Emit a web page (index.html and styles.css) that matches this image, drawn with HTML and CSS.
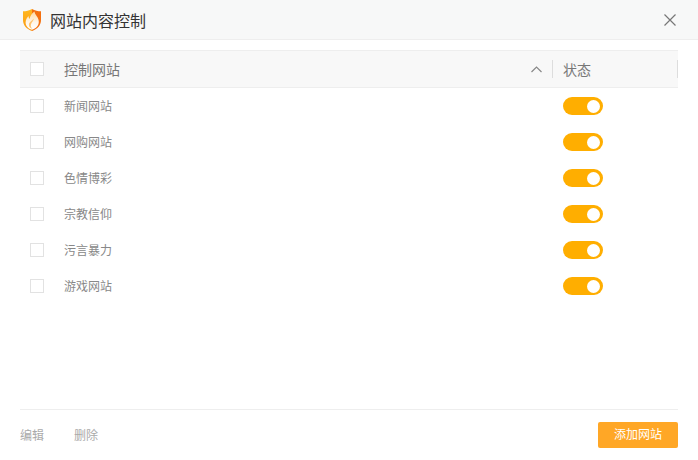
FILE: index.html
```html
<!DOCTYPE html>
<html lang="zh">
<head>
<meta charset="utf-8">
<title>网站内容控制</title>
<link rel="stylesheet" href="styles.css">
</head>
<body>
<div class="dialog">
  <header class="titlebar">
    <svg class="logo" viewBox="0 0 20 24" width="20" height="24">
      <defs>
        <linearGradient id="shieldLeft" x1="0" y1="0" x2="0" y2="1">
          <stop offset="0" stop-color="#ffb81f"/>
          <stop offset="1" stop-color="#fb9a12"/>
        </linearGradient>
        <linearGradient id="flame" x1="0" y1="0" x2="0" y2="1">
          <stop offset="0" stop-color="#ffd9a0"/>
          <stop offset="0.6" stop-color="#fff6e8"/>
          <stop offset="1" stop-color="#ffffff"/>
        </linearGradient>
      </defs>
      <path d="M10 1C7.200 2.600 4 3.300 1 3.300V12c0 5.700 4 9 9 11z" fill="url(#shieldLeft)"/>
      <path d="M10 1c2.800 1.600 6 2.300 9 2.300V12c0 5.700-4 9-9 11z" fill="#f4700f"/>
      <path d="M12.500 3.500c.3 3.400 4.300 5.600 4.300 10.200 0 3.800-2.800 7-6.800 8-3.800-1-6.400-3.800-6.400-7.200 0-2.800 1.500-4.700 2.900-6.400.1 1.300.5 2.300 1.200 3C7.800 8.300 9.800 5.400 12.500 3.500z" fill="url(#flame)"/>
      <path d="M11.600 10.500c.5 2.200-2.800 4-2.800 7 0 1.300.5 2.400 1.500 3.200-2-.5-3.400-2-3.400-4 0-2.800 3.300-3.700 4.700-6.200z" fill="#ffc46e"/>
    </svg>
    <h1 class="title">网站内容控制</h1>
    <svg class="close" viewBox="0 0 12 12" width="12" height="12">
      <path d="M.5.500l11 11M11.500.500l-11 11" stroke="#777" stroke-width="1.200" fill="none"/>
    </svg>
  </header>
  <main class="content">
    <div class="table-head">
      <span class="check"></span>
      <span class="col-name">控制网站</span>
      <svg class="chevron" viewBox="0 0 11 7" width="11" height="7">
        <path d="M.5 6l5-5 5 5" stroke="#888" stroke-width="1.200" fill="none"/>
      </svg>
      <span class="col-state">状态</span>
    </div>
    <ul class="rows">
      <li class="row"><span class="check"></span><span class="col-name">新闻网站</span><span class="switch"><span class="knob"></span></span></li>
      <li class="row"><span class="check"></span><span class="col-name">网购网站</span><span class="switch"><span class="knob"></span></span></li>
      <li class="row"><span class="check"></span><span class="col-name">色情博彩</span><span class="switch"><span class="knob"></span></span></li>
      <li class="row"><span class="check"></span><span class="col-name">宗教信仰</span><span class="switch"><span class="knob"></span></span></li>
      <li class="row"><span class="check"></span><span class="col-name">污言暴力</span><span class="switch"><span class="knob"></span></span></li>
      <li class="row"><span class="check"></span><span class="col-name">游戏网站</span><span class="switch"><span class="knob"></span></span></li>
    </ul>
  </main>
  <footer class="footer">
    <span class="link link-edit">编辑</span>
    <span class="link">删除</span>
    <span class="add">添加网站</span>
  </footer>
</div>
</body>
</html>
```
FILE: styles.css
```css
* { box-sizing: border-box; }
html, body { margin: 0; padding: 0; }
body {
  width: 698px;
  height: 460px;
  background: #fff;
  font-family: "Liberation Sans", "Noto Sans CJK SC", sans-serif;
  overflow: hidden;
}
.dialog { display: flex; flex-direction: column; height: 460px; }
.titlebar {
  height: 40px;
  background: #f7f8f8;
  border-bottom: 1px solid #eeeeee;
  display: flex;
  align-items: center;
  padding: 0 22px;
  flex: none;
}
.logo { flex: none; margin-right: 8px; }
.title { margin: 0; font-size: 16px; font-weight: 400; color: #333; flex: 1; }
.close { flex: none; }
.content { flex: 1; padding: 10px 20px 0; }
.table-head {
  height: 38px;
  background: #f8f8f8;
  border-top: 1px solid #eee;
  border-bottom: 1px solid #eee;
  display: flex;
  align-items: center;
  padding-left: 10px;
  font-size: 14px;
  color: #777;
}
.check {
  width: 14px;
  height: 14px;
  border: 1px solid #e2e2e2;
  background: #fff;
  flex: none;
  margin-right: 20px;
}
.table-head .col-name { flex: 1; }
.chevron { flex: none; margin-right: 10px; }
.col-state {
  flex: none;
  width: 126px;
  height: 18px;
  line-height: 20px;
  padding-left: 10px;
  border-left: 1px solid #ddd;
  border-right: 1px solid #ddd;
}
.rows { list-style: none; margin: 0; padding: 0; }
.row {
  height: 36px;
  display: flex;
  align-items: center;
  padding-left: 10px;
  font-size: 12px;
  color: #888;
}
.row .col-name { width: 499px; flex: none; padding-bottom: 2px; }
.switch {
  width: 40px;
  height: 18px;
  border-radius: 9px;
  background: #ffae00;
  flex: none;
  display: flex;
  align-items: center;
  justify-content: flex-end;
  padding-right: 3px;
}
.knob { width: 13px; height: 13px; border-radius: 50%; background: #fff; }
.footer {
  flex: none;
  height: 51px;
  margin: 0 20px;
  border-top: 1px solid #eee;
  display: flex;
  align-items: center;
  font-size: 12px;
  color: #aaa;
}
.link { padding-bottom: 2px; }
.link-edit { margin-right: 30px; }
.add {
  margin-left: auto;
  width: 80px;
  height: 26px;
  line-height: 26px;
  text-align: center;
  background: #ffa726;
  color: #fff;
  border-radius: 2px;
}
```
